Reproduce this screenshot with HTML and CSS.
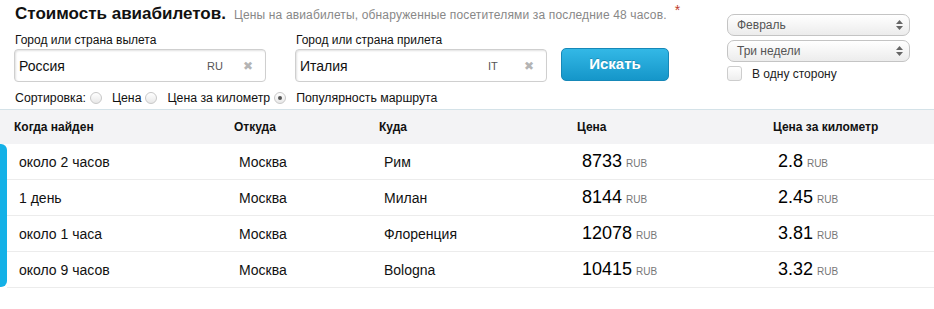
FILE: index.html
```html
<!DOCTYPE html>
<html lang="ru">
<head>
    <meta charset="UTF-8">
    <title>Стоимость авиабилетов</title>
    <link rel="stylesheet" href="styles.css">
</head>
<body>
    <div class="search">
        <div class="main">
            <div class="title">
                <h1>Стоимость авиабилетов.</h1>
                <span class="subtitle">Цены на авиабилеты, обнаруженные посетителями за последние 48 часов.</span>
                <span class="star">*</span>
            </div>
            <div class="form">
                <div class="field">
                    <label>Город или страна вылета</label>
                    <div class="input">
                        <span class="value">Россия</span>
                        <span class="code">RU</span>
                        <span class="clear">&#10006;</span>
                    </div>
                </div>
                <div class="field">
                    <label>Город или страна прилета</label>
                    <div class="input">
                        <span class="value">Италия</span>
                        <span class="code">IT</span>
                        <span class="clear">&#10006;</span>
                    </div>
                </div>
                <button class="go">Искать</button>
            </div>
            <div class="sort">
                <span>Сортировка:</span>
                <span class="radio"></span><span>Цена</span>
                <span class="radio"></span><span>Цена за километр</span>
                <span class="radio checked"></span><span>Популярность маршрута</span>
            </div>
        </div>
        <div class="side">
            <div class="select">
                <span>Февраль</span>
                <svg width="7" height="10" viewBox="0 0 7 10"><path d="M3.5 0L7 4H0z M3.5 10L0 6h7z" fill="#666"/></svg>
            </div>
            <div class="select">
                <span>Три недели</span>
                <svg width="7" height="10" viewBox="0 0 7 10"><path d="M3.5 0L7 4H0z M3.5 10L0 6h7z" fill="#666"/></svg>
            </div>
            <div class="oneway">
                <span class="check"></span>
                <span>В одну сторону</span>
            </div>
        </div>
    </div>

    <div class="results">
        <div class="head">
            <div>Когда найден</div>
            <div>Откуда</div>
            <div>Куда</div>
            <div>Цена</div>
            <div>Цена за километр</div>
        </div>
        <div class="body">
            <div class="bar"></div>
            <div class="rows">
                <div class="row">
                    <div>около 2 часов</div>
                    <div>Москва</div>
                    <div>Рим</div>
                    <div><b>8733</b> <small>RUB</small></div>
                    <div><b>2.8</b> <small>RUB</small></div>
                </div>
                <div class="row">
                    <div>1 день</div>
                    <div>Москва</div>
                    <div>Милан</div>
                    <div><b>8144</b> <small>RUB</small></div>
                    <div><b>2.45</b> <small>RUB</small></div>
                </div>
                <div class="row">
                    <div>около 1 часа</div>
                    <div>Москва</div>
                    <div>Флоренция</div>
                    <div><b>12078</b> <small>RUB</small></div>
                    <div><b>3.81</b> <small>RUB</small></div>
                </div>
                <div class="row">
                    <div>около 9 часов</div>
                    <div>Москва</div>
                    <div>Bologna</div>
                    <div><b>10415</b> <small>RUB</small></div>
                    <div><b>3.32</b> <small>RUB</small></div>
                </div>
            </div>
        </div>
    </div>
</body>
</html>
```

FILE: styles.css
```css
body {
    margin: 0;
    font-family: "Liberation Sans", Arial, sans-serif;
    color: #111;
    background: #fff;
}
.search {
    display: flex;
    padding-left: 14px;
    height: 109px;
}
.main {
    width: 713px;
}
.title {
    display: flex;
    align-items: baseline;
    padding-top: 4px;
    height: 33px;
    box-sizing: border-box;
}
.title h1 {
    margin: 0 0 0 1px;
    font-size: 17px;
    font-weight: bold;
    color: #111;
}
.subtitle {
    margin-left: 8px;
    font-size: 12px;
    color: #888;
    letter-spacing: 0.15px;
}
.star {
    margin-left: 8px;
    color: #c0392b;
    font-size: 14px;
    position: relative;
    top: -4px;
}
.form {
    display: flex;
    align-items: flex-end;
}
.field {
    width: 252px;
    margin-right: 29px;
}
.field label {
    display: block;
    font-size: 12px;
    line-height: 14px;
    padding-left: 1px;
    margin-bottom: 2px;
}
.input {
    display: flex;
    align-items: center;
    height: 33px;
    box-sizing: border-box;
    border: 1px solid #cfcfcf;
    border-radius: 4px;
    box-shadow: inset 1px 1px 2px rgba(0, 0, 0, 0.12);
    padding: 0 0 0 4px;
}
.input .value {
    flex: 1;
    font-size: 14px;
}
.input .code {
    font-size: 11px;
    color: #555;
    width: 36px;
}
.input .clear {
    font-size: 12px;
    color: #b4b4b4;
    width: 22px;
}
.go {
    width: 108px;
    height: 33px;
    margin-left: -15px;
    margin-bottom: 1px;
    padding-bottom: 4px;
    border: 1px solid #1688b8;
    border-radius: 5px;
    background: linear-gradient(#33b8e6, #1596c9);
    color: #fff;
    font-family: "Liberation Sans", Arial, sans-serif;
    font-size: 15px;
    font-weight: bold;
    text-shadow: 0 -1px 0 rgba(0, 0, 0, 0.2);
}
.sort {
    display: flex;
    align-items: center;
    margin-top: 9px;
    font-size: 12.3px;
    padding-left: 1px;
}
.radio {
    width: 12px;
    height: 12px;
    box-sizing: border-box;
    border: 1px solid #c8c8c8;
    border-radius: 50%;
    background: linear-gradient(#fff, #e8e8e8);
    margin: 0 10px 0 4px;
    position: relative;
}
.radio.checked::after {
    content: "";
    position: absolute;
    left: 3px;
    top: 3px;
    width: 4px;
    height: 4px;
    border-radius: 50%;
    background: #555;
}
.side {
    padding-top: 14px;
}
.select {
    display: flex;
    align-items: center;
    justify-content: space-between;
    width: 183px;
    height: 22px;
    box-sizing: border-box;
    border: 1px solid #c4c4c4;
    border-radius: 7px;
    background: linear-gradient(#fff, #ececec);
    padding: 0 6px 0 9px;
    font-size: 12px;
    color: #555;
    margin-bottom: 4px;
}
.oneway {
    display: flex;
    align-items: center;
    font-size: 12px;
    color: #222;
}
.check {
    width: 15px;
    height: 15px;
    box-sizing: border-box;
    border: 1px solid #cdcdcd;
    border-radius: 3px;
    background: linear-gradient(#fff, #eee);
    margin-right: 10px;
}
.head,
.row {
    display: grid;
    grid-template-columns: 220px 145px 198px 196px 1fr;
    align-items: center;
}
.head {
    border-top: 1px solid #d4e2e8;
    background: #f3f3f5;
    height: 34px;
    padding-left: 14px;
    font-size: 12px;
    font-weight: bold;
}
.body {
    display: flex;
}
.bar {
    width: 7px;
    background: #14b1e7;
    border-radius: 0 6px 6px 0;
    margin-bottom: 1px;
}
.rows {
    flex: 1;
}
.row {
    height: 36px;
    box-sizing: border-box;
    border-bottom: 1px solid #ececec;
    padding-left: 12px;
    font-size: 14px;
}
.row b {
    font-size: 18px;
    font-weight: normal;
    color: #000;
}
.row small {
    font-size: 10px;
    color: #777;
}
```
